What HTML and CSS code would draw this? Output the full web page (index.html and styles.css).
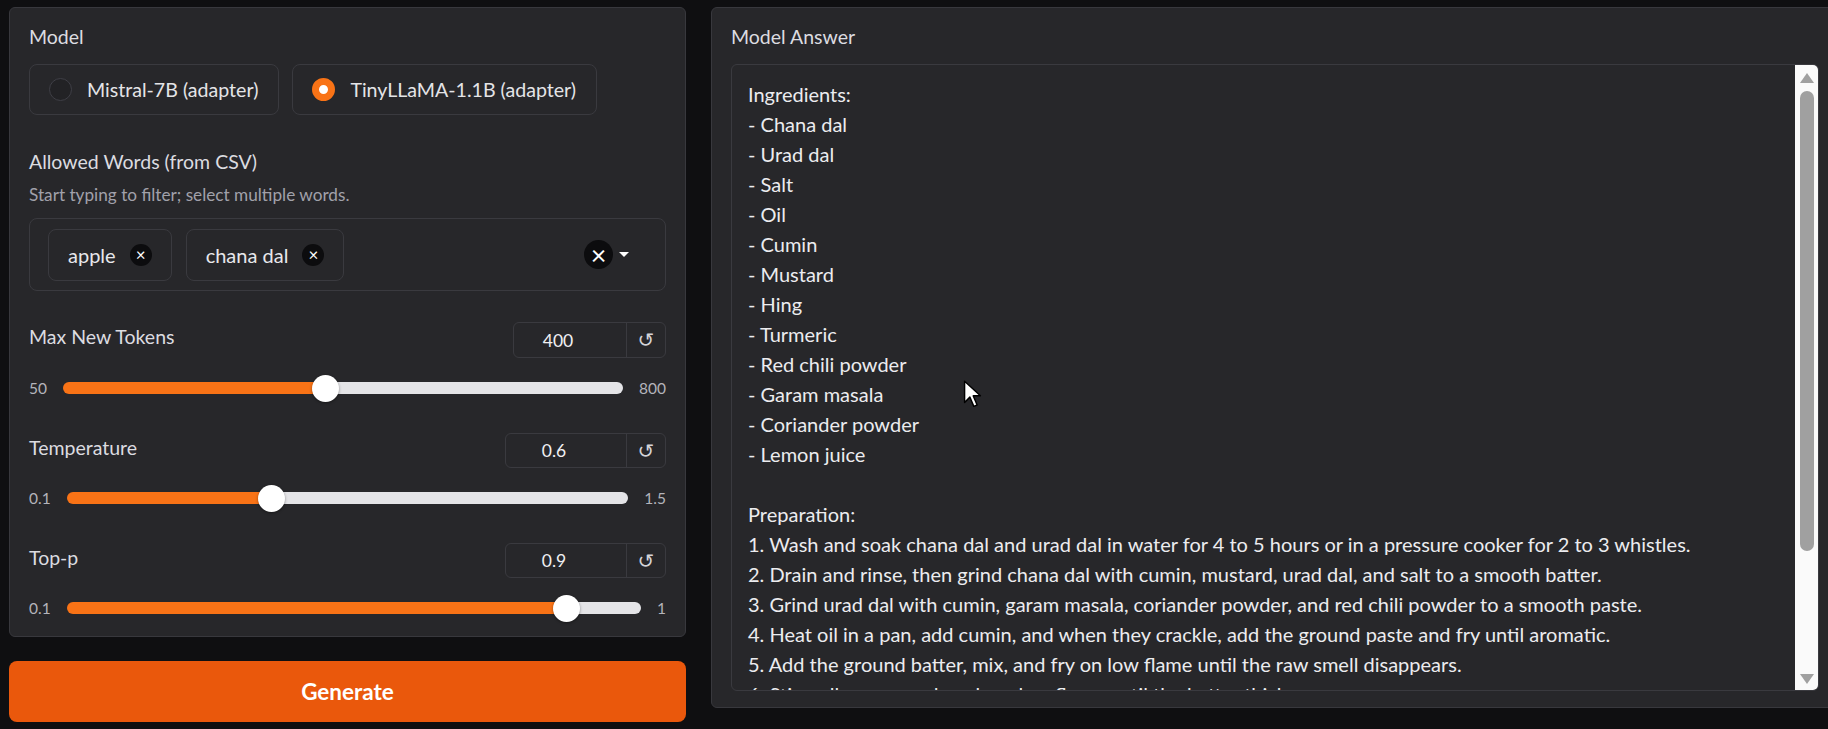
FILE: index.html
```html
<!DOCTYPE html>
<html lang="en">

<head>
    <meta charset="UTF-8">
    <title>Recipe Generator</title>
    <link rel="stylesheet" href="styles.css">
</head>

<body>
    <div class="app">
        <!-- Controls column -->
        <div class="left-col">
            <div class="panel controls">
                <div class="label">Model</div>
                <div class="radio-group">
                    <label class="radio"><span class="dot"></span>Mistral-7B (adapter)</label>
                    <label class="radio checked"><span class="dot"></span>TinyLLaMA-1.1B (adapter)</label>
                </div>

                <div class="label words-label">Allowed Words (from CSV)</div>
                <div class="info">Start typing to filter; select multiple words.</div>
                <div class="dropdown">
                    <span class="chip">apple<span class="chip-x">×</span></span>
                    <span class="chip">chana dal<span class="chip-x">×</span></span>
                    <span class="dd-actions">
                        <span class="clear">×</span>
                        <span class="caret"></span>
                    </span>
                </div>

                <div class="slider-field">
                    <div class="slider-head">
                        <div class="label">Max New Tokens</div>
                        <div class="number">
                            <span class="number-value">400</span>
                            <span class="reset">↺</span>
                        </div>
                    </div>
                    <div class="slider-row">
                        <span class="range-label">50</span>
                        <input type="range" min="50" max="800" value="400" style="--pct: 46.7%">
                        <span class="range-label">800</span>
                    </div>
                </div>

                <div class="slider-field">
                    <div class="slider-head">
                        <div class="label">Temperature</div>
                        <div class="number wide">
                            <span class="number-value">0.6</span>
                            <span class="reset">↺</span>
                        </div>
                    </div>
                    <div class="slider-row">
                        <span class="range-label">0.1</span>
                        <input type="range" min="0.1" max="1.5" step="0.1" value="0.6" style="--pct: 35.7%">
                        <span class="range-label">1.5</span>
                    </div>
                </div>

                <div class="slider-field">
                    <div class="slider-head">
                        <div class="label">Top-p</div>
                        <div class="number wide">
                            <span class="number-value">0.9</span>
                            <span class="reset">↺</span>
                        </div>
                    </div>
                    <div class="slider-row">
                        <span class="range-label">0.1</span>
                        <input type="range" min="0.1" max="1" step="0.05" value="0.9" style="--pct: 88.9%">
                        <span class="range-label">1</span>
                    </div>
                </div>
            </div>

            <button class="generate">Generate</button>
        </div>

        <!-- Output column -->
        <div class="panel answer">
            <div class="label">Model Answer</div>
            <div class="textbox">
                <div class="textbox-text">Ingredients:
- Chana dal
- Urad dal
- Salt
- Oil
- Cumin
- Mustard
- Hing
- Turmeric
- Red chili powder
- Garam masala
- Coriander powder
- Lemon juice

Preparation:
1. Wash and soak chana dal and urad dal in water for 4 to 5 hours or in a pressure cooker for 2 to 3 whistles.
2. Drain and rinse, then grind chana dal with cumin, mustard, urad dal, and salt to a smooth batter.
3. Grind urad dal with cumin, garam masala, coriander powder, and red chili powder to a smooth paste.
4. Heat oil in a pan, add cumin, and when they crackle, add the ground paste and fry until aromatic.
5. Add the ground batter, mix, and fry on low flame until the raw smell disappears.
6. Stir well, cover, and cook on low flame until the batter thickens.
7. Add lemon juice and serve hot.</div>
                <div class="scrollbar">
                    <span class="arrow up"></span>
                    <span class="thumb"></span>
                    <span class="arrow down"></span>
                </div>
            </div>
        </div>
    </div>

    <!-- mouse pointer -->
    <svg class="cursor" width="19" height="29" viewBox="0 0 14 22">
        <path d="M1 1 L1 17 L5 13 L8 20 L10.5 19 L7.5 12 L13 12 Z" fill="#fff" stroke="#000" stroke-width="1.1" stroke-linejoin="round"/>
    </svg>
</body>

</html>
```

FILE: styles.css
```css
* {
    box-sizing: border-box;
    margin: 0;
    padding: 0;
}

body {
    font-family: 'Lato', 'Liberation Sans', sans-serif;
    background-color: #0f0f11;
    color: #e4e4e7;
    padding: 7px 9px;
    overflow: hidden;
    height: 729px;
}

.app {
    display: grid;
    grid-template-columns: 677px 1128px;
    gap: 25px;
    align-items: start;
    width: max-content;
}

.panel {
    background-color: #27272a;
    border: 1px solid #38383d;
    border-radius: 6px;
}

.label {
    font-size: 19.5px;
    line-height: 26px;
    color: #dcdce0;
}

/* Controls */
.controls {
    padding: 16px 19px 14px 19px;
}

.radio-group {
    display: flex;
    gap: 13px;
    margin-top: 14px;
}

.radio {
    display: flex;
    align-items: center;
    gap: 15px;
    height: 51px;
    padding: 0 20px 0 19px;
    border: 1px solid #3a3a3f;
    border-radius: 8px;
    font-size: 19.6px;
    color: #e4e4e7;
}

.dot {
    width: 23px;
    height: 23px;
    border-radius: 50%;
    border: 1px solid #3f3f46;
    background-color: #222225;
}

.radio.checked .dot {
    border: 7.5px solid #f97316;
    background-color: #fff;
}

.words-label {
    margin-top: 34px;
}

.info {
    font-size: 17.2px;
    line-height: 22px;
    color: #a1a1aa;
    margin-top: 9px;
}

.dropdown {
    display: flex;
    align-items: center;
    gap: 14px;
    margin-top: 12px;
    height: 73px;
    padding: 0 18px;
    border: 1px solid #3a3a3f;
    border-radius: 8px;
}

.chip {
    display: flex;
    align-items: center;
    gap: 14px;
    height: 52px;
    padding: 0 19px;
    border: 1px solid #3a3a3f;
    border-radius: 8px;
    font-size: 20px;
    color: #e8e8ec;
}

.chip-x {
    display: flex;
    align-items: center;
    justify-content: center;
    width: 22px;
    height: 22px;
    border-radius: 50%;
    background-color: #0c0c0e;
    color: #fff;
    font-size: 17px;
    line-height: 1;
}

.dd-actions {
    margin-left: auto;
    display: flex;
    align-items: center;
    gap: 6px;
    padding-right: 18px;
}

.clear {
    display: flex;
    align-items: center;
    justify-content: center;
    width: 29px;
    height: 29px;
    border-radius: 50%;
    background-color: #0c0c0e;
    color: #fff;
    font-size: 27px;
    line-height: 1;
}

.caret {
    width: 0;
    height: 0;
    border-left: 5px solid transparent;
    border-right: 5px solid transparent;
    border-top: 5px solid #fff;
}

.slider-field {
    margin-top: 31px;
}

.slider-head {
    display: flex;
    justify-content: space-between;
    align-items: flex-start;
}

.slider-head .label {
    padding-top: 2px;
}

.number {
    display: flex;
    width: 153px;
    height: 36px;
    border: 1px solid #3a3a3f;
    border-radius: 6px;
    font-size: 17.5px;
}

.number.wide {
    width: 161px;
    height: 35px;
}

.number-value {
    flex: 1;
    display: flex;
    align-items: center;
    justify-content: center;
    padding-right: 24px;
    color: #f0f0f2;
}

.reset {
    display: flex;
    align-items: center;
    justify-content: center;
    width: 39px;
    border-left: 1px solid #3a3a3f;
    font-family: 'DejaVu Sans', sans-serif;
    font-size: 20px;
    color: #d4d4d8;
}

.slider-row {
    display: flex;
    align-items: center;
    gap: 16px;
    height: 28px;
    margin-top: 16px;
}

.range-label {
    font-size: 15.5px;
    color: #b4b4bb;
}

input[type="range"] {
    -webkit-appearance: none;
    appearance: none;
    flex: 1;
    height: 12px;
    border-radius: 6px;
    background: linear-gradient(to right, #f97316 var(--pct), #e4e4e7 var(--pct));
    outline: none;
}

input[type="range"]::-webkit-slider-thumb {
    -webkit-appearance: none;
    width: 27px;
    height: 27px;
    border-radius: 50%;
    background-color: #fff;
    box-shadow: 0 1px 3px rgba(0, 0, 0, 0.4);
}

.generate {
    display: block;
    width: 100%;
    height: 61px;
    margin-top: 24px;
    border: none;
    border-radius: 8px;
    background-color: #ea580c;
    color: #fff;
    font-family: inherit;
    font-size: 22.5px;
    font-weight: bold;
}

/* Answer */
.answer {
    padding: 16px 19px 16px 19px;
}

.answer .label {
    font-size: 19.5px;
}

.answer .textbox {
    display: flex;
    margin-top: 14px;
    height: 627px;
    border: 1px solid #3a3a3f;
    border-radius: 6px;
    overflow: hidden;
}

.textbox-text {
    flex: 1;
    padding: 14px 16px 0 16px;
    white-space: pre-wrap;
    font-size: 20px;
    line-height: 30px;
    color: #ececef;
    overflow: hidden;
}

.scrollbar {
    width: 23px;
    background-color: #fafafa;
    display: flex;
    flex-direction: column;
    align-items: center;
}

.thumb {
    width: 14px;
    height: 460px;
    border-radius: 7px;
    background-color: #a0a0a0;
    margin-top: 8px;
}

.arrow {
    width: 0;
    height: 0;
    border-left: 7px solid transparent;
    border-right: 7px solid transparent;
}

.arrow.up {
    margin-top: 8px;
    border-bottom: 10px solid #a0a0a0;
}

.arrow.down {
    margin-top: auto;
    margin-bottom: 6px;
    border-top: 10px solid #a0a0a0;
}

.cursor {
    position: absolute;
    left: 963px;
    top: 380px;
}
```
